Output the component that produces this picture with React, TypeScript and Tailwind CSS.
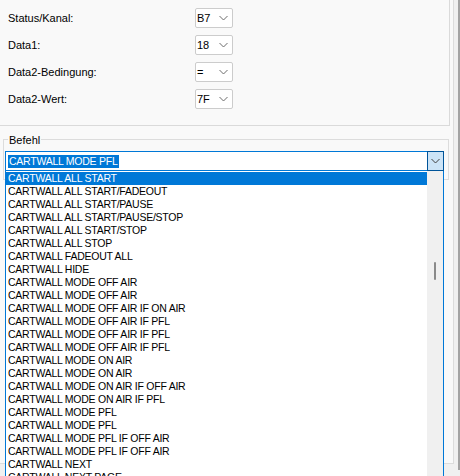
import React from "react"

const fields = [
  { label: "Status/Kanal:", value: "B7" },
  { label: "Data1:", value: "18" },
  { label: "Data2-Bedingung:", value: "=" },
  { label: "Data2-Wert:", value: "7F" },
]

const befehle = [
  "CARTWALL ALL START",
  "CARTWALL ALL START/FADEOUT",
  "CARTWALL ALL START/PAUSE",
  "CARTWALL ALL START/PAUSE/STOP",
  "CARTWALL ALL START/STOP",
  "CARTWALL ALL STOP",
  "CARTWALL FADEOUT ALL",
  "CARTWALL HIDE",
  "CARTWALL MODE OFF AIR",
  "CARTWALL MODE OFF AIR",
  "CARTWALL MODE OFF AIR IF ON AIR",
  "CARTWALL MODE OFF AIR IF PFL",
  "CARTWALL MODE OFF AIR IF PFL",
  "CARTWALL MODE OFF AIR IF PFL",
  "CARTWALL MODE ON AIR",
  "CARTWALL MODE ON AIR",
  "CARTWALL MODE ON AIR IF OFF AIR",
  "CARTWALL MODE ON AIR IF PFL",
  "CARTWALL MODE PFL",
  "CARTWALL MODE PFL",
  "CARTWALL MODE PFL IF OFF AIR",
  "CARTWALL MODE PFL IF OFF AIR",
  "CARTWALL NEXT",
  "CARTWALL NEXT PAGE",
]

function Chevron({ color = "#6d6d6d" }: { color?: string }) {
  return (
    <svg width="9" height="6" viewBox="0 0 9 6" fill="none">
      <path d="M0.5 1 L4.5 5 L8.5 1" stroke={color} strokeWidth="1" />
    </svg>
  )
}

function SmallCombo({ value }: { value: string }) {
  return (
    <div className="w-[38px] h-[20px] bg-white border border-[#cccccc] rounded-[2px] flex items-center justify-between pl-[1px] pr-[4px]">
      <span className="text-[11px] leading-none text-black">{value}</span>
      <Chevron />
    </div>
  )
}

export default function App() {
  return (
    <div
      className="relative w-[460px] h-[476px] overflow-hidden bg-[#f0f0f0] flex"
      style={{ fontFamily: '"Liberation Sans", Arial, sans-serif' }}
    >
      <div className="w-[454px] h-[464px] bg-[#f9f9f9] border-r border-b border-[#dcdcdc] flex flex-col">
        {/* MIDI-Filter */}
        <div className="w-[450px] h-[126px] border-r border-b border-[#dadada] pl-[8px] pt-[8px] flex flex-col gap-[7px]">
          {fields.map((f) => (
            <div key={f.label} className="flex items-center h-[20px]">
              <span className="w-[187px] text-[11px] text-black">{f.label}</span>
              <SmallCombo value={f.value} />
            </div>
          ))}
        </div>

        {/* Befehl */}
        <div className="relative ml-[3px] mt-[13px] w-[446px] h-[41px] border border-[#dcdcdc]">
          <span className="absolute -top-[6px] left-[4px] bg-[#f9f9f9] px-[1px] text-[11px] leading-[13px] text-black">
            Befehl
          </span>
          <div className="mt-[11px] ml-[1px] w-[439px] h-[20px] bg-white border border-[#0078d7] flex items-center">
            <div className="flex-1 flex items-center pl-[2px]">
              <span className="w-fit bg-[#0078d7] text-white text-[10.5px] tracking-[-0.25px] leading-[13px] px-[1px] whitespace-nowrap">
                CARTWALL MODE PFL
              </span>
            </div>
            <div className="w-[17px] h-[20px] -mr-[1px] bg-[#cce4f7] border border-[#005499] flex items-center justify-center">
              <Chevron color="#404040" />
            </div>
          </div>
        </div>
      </div>

      <div className="flex-1 flex justify-end">
        <div className="w-[2px] h-[470px] bg-[#a3a3a3]" />
      </div>

      {/* aufgeklappte Liste */}
      <div className="absolute left-[5px] top-[171px] w-[439px] h-[320px] bg-white border-x border-[#0078d7] flex">
        <div className="flex-1 pt-[1px]">
          {befehle.map((b, i) => (
            <div
              key={i}
              className={
                i === 0
                  ? "h-[13px] pl-[2px] bg-[#0078d7] text-white text-[10.5px] tracking-[-0.25px] leading-[13px] whitespace-nowrap"
                  : "h-[13px] pl-[2px] text-black text-[10.5px] tracking-[-0.25px] leading-[13px] whitespace-nowrap"
              }
            >
              {b}
            </div>
          ))}
        </div>
        <div className="w-[16px] bg-[#f0f0f0] pt-[91px] flex justify-center">
          <div className="w-[2px] h-[18px] rounded-full bg-[#8a8a8a]" />
        </div>
      </div>
    </div>
  )
}
